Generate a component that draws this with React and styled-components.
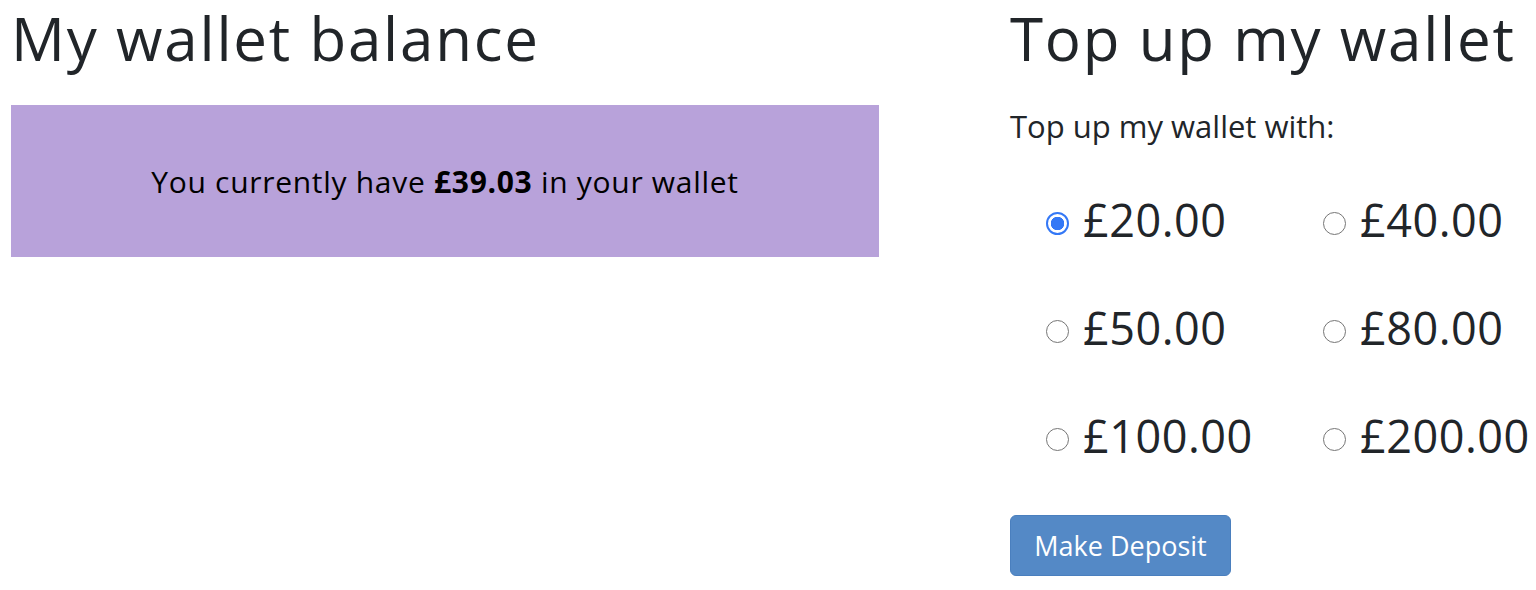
import React, { useState } from "react";
import styled, { createGlobalStyle } from "styled-components";

const amounts = ["20.00", "40.00", "50.00", "80.00", "100.00", "200.00"];

const GlobalStyle = createGlobalStyle`
  body {
    margin: 0;
    background: #fff;
    font-family: "Open Sans", "Liberation Sans", sans-serif;
    color: #212529;
  }
`;

function App() {
  const [amount, setAmount] = useState("20.00");
  return (
    <>
      <GlobalStyle />
      <Page>
        <BalanceColumn>
          <Heading>My wallet balance</Heading>
          <BalanceBox>
            <BalanceText>
              You currently have <strong>£39.03</strong> in your wallet
            </BalanceText>
          </BalanceBox>
        </BalanceColumn>
        <TopUpColumn>
          <Heading>Top up my wallet</Heading>
          <SubText>Top up my wallet with:</SubText>
          <OptionGrid>
            {amounts.map((a) => (
              <Option key={a}>
                <Radio
                  type="radio"
                  name="amount"
                  value={a}
                  checked={amount === a}
                  onChange={() => setAmount(a)}
                />
                £{a}
              </Option>
            ))}
          </OptionGrid>
          <DepositButton>Make Deposit</DepositButton>
        </TopUpColumn>
      </Page>
    </>
  );
}

const Page = styled.div`
  display: flex;
  gap: 131px;
  padding: 2px 0 0 11px;
`;

const BalanceColumn = styled.div`
  width: 868px;
  flex-shrink: 0;
`;

const TopUpColumn = styled.div`
  display: flex;
  flex-direction: column;
  align-items: flex-start;
`;

const Heading = styled.h1`
  margin: 0;
  font-size: 60px;
  line-height: 72px;
  font-weight: 400;
  letter-spacing: 1.8px;
  color: #212529;
  white-space: nowrap;
`;

const BalanceBox = styled.div`
  margin-top: 31px;
  height: 152px;
  background: #b8a2da;
  display: flex;
  align-items: center;
  justify-content: center;
`;

const BalanceText = styled.p`
  margin: 0;
  font-size: 30px;
  letter-spacing: 0.7px;
  color: #000;
  strong {
    font-weight: 700;
  }
`;

const SubText = styled.p`
  margin: 32px 0 0;
  font-size: 31px;
  line-height: 40px;
`;

const OptionGrid = styled.div`
  margin-top: 47px;
  padding-left: 36px;
  display: grid;
  grid-template-columns: 277px auto;
  row-gap: 55px;
`;

const Option = styled.label`
  display: flex;
  align-items: center;
  gap: 14px;
  font-size: 45px;
  line-height: 53px;
  letter-spacing: 0.5px;
  white-space: nowrap;
  color: #212529;
`;

const Radio = styled.input`
  appearance: none;
  margin: 8px 0 0;
  width: 23px;
  height: 23px;
  border-radius: 50%;
  border: 1.5px solid #767676;
  background: #fff;
  flex-shrink: 0;

  &:checked {
    border: 2px solid #3478f6;
    background: radial-gradient(circle, #3478f6 0 6.5px, #fff 7px);
  }
`;

const DepositButton = styled.button`
  margin-top: 53px;
  width: 221px;
  height: 61px;
  border: 1px solid #4a7fbe;
  border-radius: 6px;
  background: #5489c6;
  color: #fff;
  font-family: "Open Sans", "Liberation Sans", sans-serif;
  font-size: 27px;
  font-weight: 500;
  cursor: pointer;
`;

export default App;
